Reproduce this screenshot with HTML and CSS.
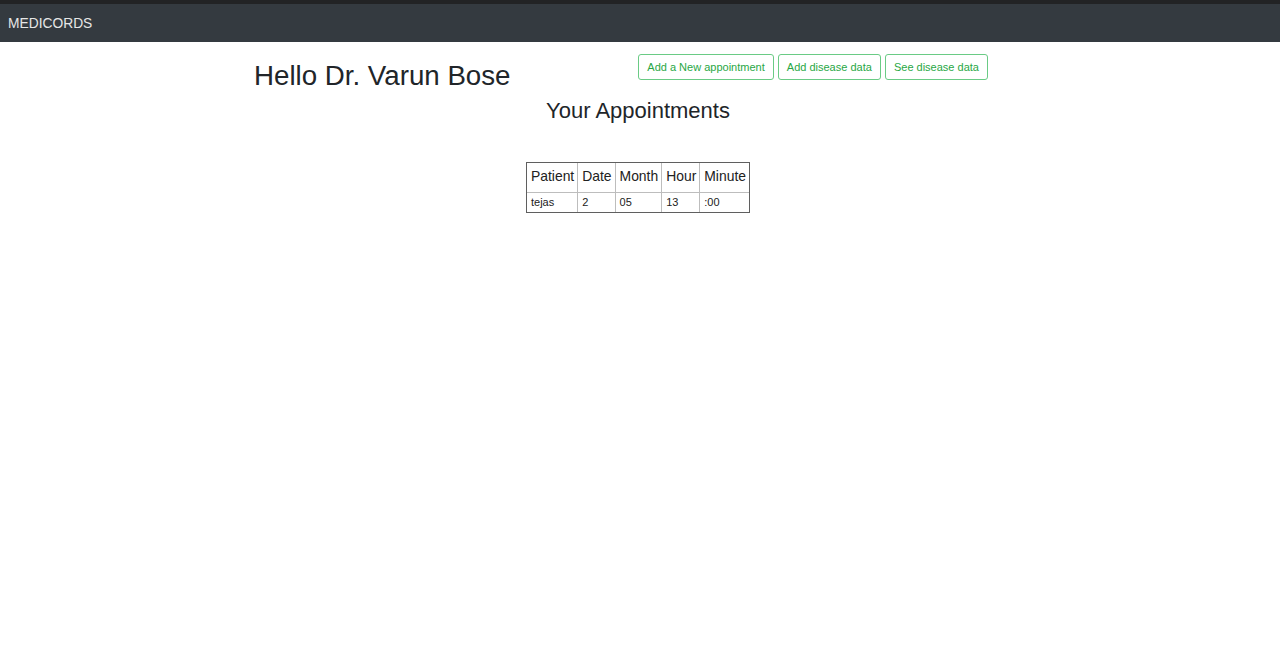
FILE: index.html
```html
<!DOCTYPE html>
<html>
<head>
<meta charset="utf-8">
<title>Medicords</title>
<link rel="stylesheet" href="styles.css">
</head>
<body>
<div class="topstrip"></div>
<nav class="navbar"><span class="brand">MEDICORDS</span></nav>
<main class="page">
  <div class="header-row">
    <h1 class="greeting">Hello Dr. Varun Bose</h1>
    <div class="actions">
      <a class="btn">Add a New appointment</a>
      <a class="btn">Add disease data</a>
      <a class="btn">See disease data</a>
    </div>
  </div>
  <h2 class="section-title">Your Appointments</h2>
  <div class="table-wrap">
    <table class="appts">
      <thead>
        <tr><th>Patient</th><th>Date</th><th>Month</th><th>Hour</th><th>Minute</th></tr>
      </thead>
      <tbody>
        <tr><td>tejas</td><td>2</td><td>05</td><td>13</td><td>:00</td></tr>
      </tbody>
    </table>
  </div>
</main>
</body>
</html>
```
FILE: styles.css
```css
html, body {
  margin: 0;
  padding: 0;
  background: #fff;
  font-family: "Liberation Sans", Arial, sans-serif;
  color: #212529;
}
.topstrip {
  height: 4px;
  background: #222325;
}
.navbar {
  height: 38px;
  background: #343a40;
  display: flex;
  align-items: center;
  padding: 0 8px;
}
.brand {
  color: #e6e6e6;
  font-size: 13.8px;
}
.page {
  width: 772px;
  margin-left: calc(50% - 388px);
}
.header-row {
  display: grid;
  grid-template-columns: 1fr 1fr;
}
.greeting {
  margin: 17px 0 0 2px;
  font-size: 27.7px;
  font-weight: 400;
  line-height: 1.2;
}
.actions {
  margin-top: 12px;
  display: flex;
  gap: 3.5px;
  align-items: flex-start;
}
.btn {
  display: inline-flex;
  align-items: center;
  height: 26px;
  box-sizing: border-box;
  padding: 0 8.3px;
  border: 1px solid #6acb85;
  border-radius: 3px;
  color: #28a745;
  font-size: 11px;
  white-space: nowrap;
}
.section-title {
  margin: 6px 0 0 0;
  text-align: center;
  font-size: 22px;
  font-weight: 400;
  line-height: 1.2;
}
.table-wrap {
  display: flex;
  justify-content: center;
  margin-top: 37px;
}
.appts {
  border-collapse: separate;
  border-spacing: 0;
  border: 1px solid #5f5f5f;
}
.appts th, .appts td {
  border-right: 1px solid #bdbdbd;
  text-align: left;
  font-weight: 400;
  color: #212121;
}
.appts th {
  font-size: 13.9px;
  padding: 5px 3px 8px 4px;
  line-height: 16px;
  border-bottom: 1px solid #bdbdbd;
}
.appts th:last-child, .appts td:last-child {
  border-right: none;
}
.appts td {
  font-size: 11px;
  padding: 3px 3px 3px 4px;
  line-height: 13px;
}
```
